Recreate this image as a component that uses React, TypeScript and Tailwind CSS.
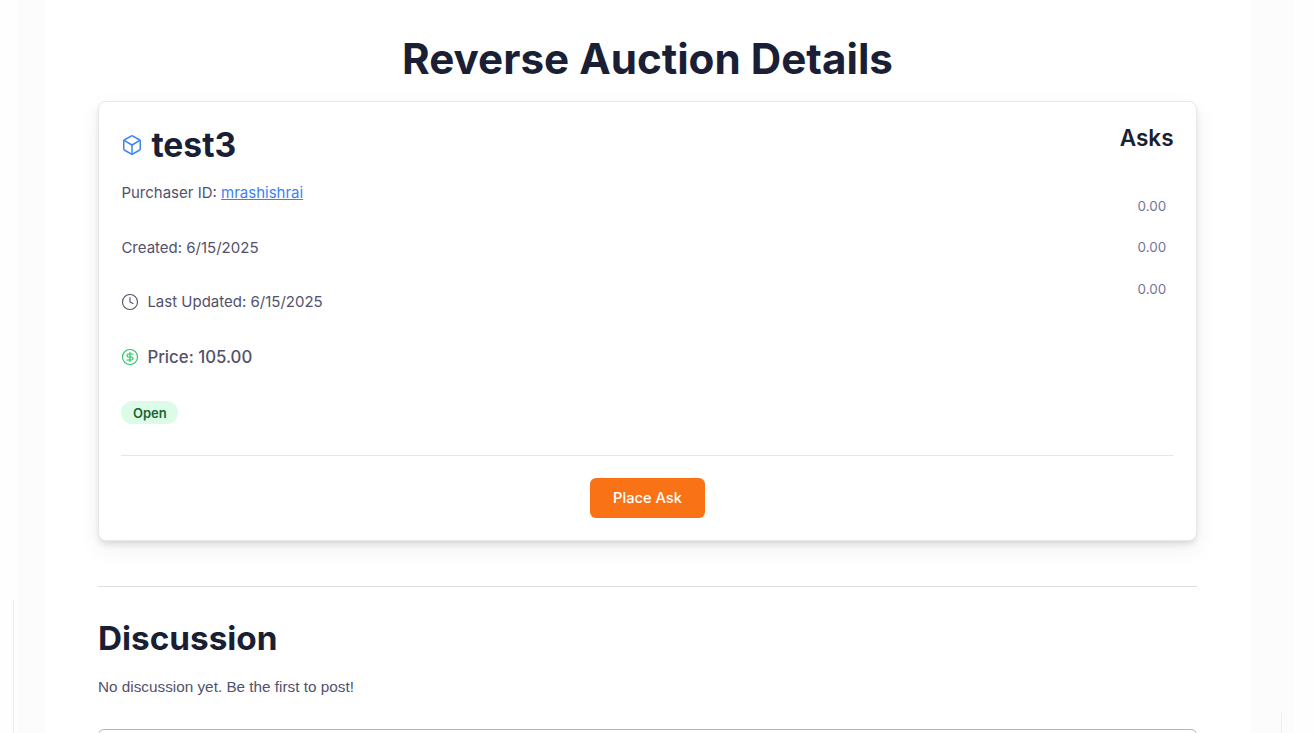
import { Box, Clock, CircleDollarSign } from "lucide-react";

export default function App() {
  const inter = "font-['Inter',sans-serif]";
  return (
    <div className={`relative h-[733px] w-full overflow-hidden bg-[#fefefe] antialiased ${inter} text-[#1a1f36]`}>
      <div className="absolute left-[13px] top-[600px] h-[133px] w-px bg-[#eeeeee]" />
      <div className="absolute left-[1281px] top-[713px] h-[20px] w-px bg-[#eeeeee]" />
      <div className="mr-[21px] ml-[17px] h-full bg-[#fcfcfc] pl-[28px]">
        <div className="h-full w-[1205px] bg-white px-[53px]">
          <h1 className="pt-[32px] text-center text-[42.2px] leading-[54px] font-bold text-[#1a1f36]">Reverse Auction Details</h1>
          <div className="mt-[15px] rounded-lg border border-[#e8e8ec] bg-white px-[22.4px] pt-[22px] pb-[22px] shadow-[0_4px_6px_-1px_rgba(0,0,0,0.12),0_8px_24px_rgba(0,0,0,0.06)]">
            <div className="flex h-[332px] justify-between border-b border-[#e5e7eb]">
              <div>
                <div className="flex h-[42px] items-center gap-[8px]">
                  <Box size={22} className="text-[#3b82f6]" strokeWidth={1.6} />
                  <h2 className="text-[33.6px] leading-[42px] font-bold">test3</h2>
                </div>
                <p className="mt-[16px] text-[15px] leading-[22px] text-[#52526c]">
                  Purchaser ID: <span className="text-[#3b82f6] underline">mrashishrai</span>
                </p>
                <p className="mt-[33px] text-[15px] leading-[22px] text-[#52526c]">Created: 6/15/2025</p>
                <p className="mt-[32px] flex items-center gap-[8px] text-[15px] leading-[22px] text-[#52526c]">
                  <Clock size={18} strokeWidth={1.5} />
                  Last Updated: 6/15/2025
                </p>
                <p className="mt-[32px] flex items-center gap-[8px] text-[16.8px] leading-[24px] font-medium text-[#52526c]">
                  <CircleDollarSign size={18} strokeWidth={1.5} className="text-[#22c55e]" />
                  Price: 105.00
                </p>
                <span className="mt-[32px] inline-block h-[23px] rounded-full bg-[#dcfce7] px-[11.5px] text-[13px] leading-[24px] font-semibold text-[#166534]">Open</span>
              </div>
              <div className="text-right">
                <h3 className="text-[22.6px] leading-[28px] font-semibold">Asks</h3>
                <div className="mt-[44px] pr-[7.5px] text-[13.4px] leading-[20px] text-[#74749a]">
                  <p>0.00</p>
                  <p className="mt-[21px]">0.00</p>
                  <p className="mt-[22px]">0.00</p>
                </div>
              </div>
            </div>
            <div className="mt-[22px] flex justify-center">
              <button className="h-[40px] w-[115px] rounded-md bg-[#f97316] text-[14.7px] font-medium text-white">Place Ask</button>
            </div>
          </div>
          <div className="mt-[45px] border-t border-[#dddddd]" />
          <h2 className="mt-[28px] text-[33.3px] leading-[46px] font-bold">Discussion</h2>
          <p className="mt-[15px] font-['Liberation_Sans',sans-serif] text-[15.3px] leading-[22px] text-[#52526c]">No discussion yet. Be the first to post!</p>
          <textarea className="mt-[31px] h-[100px] w-full rounded-md border border-[#b5b5b5] bg-white" />
        </div>
      </div>
    </div>
  );
}
